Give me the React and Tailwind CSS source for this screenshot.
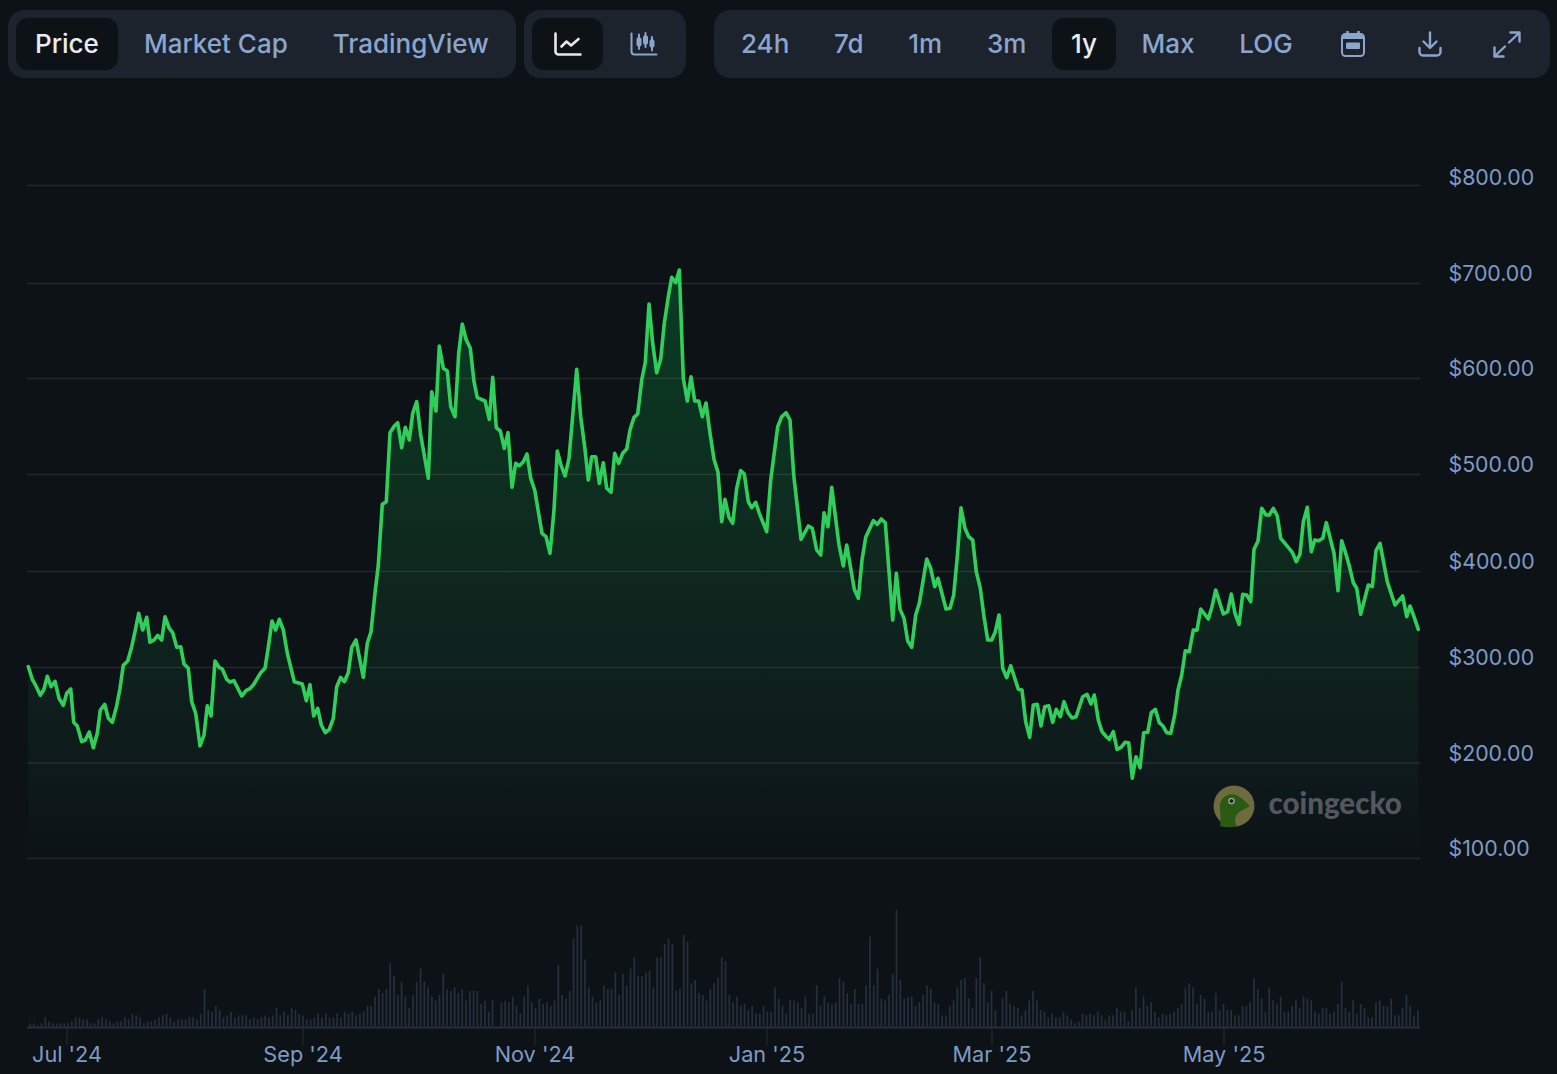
import React from "react";

const PRICE = [
  [28.3,666.7],[32.3,679.3],[36,686],[40.3,695.3],[44,689.3],[47.3,676.3],[51,686.7],[55,681.3],[59,698.3],[63.3,705.3],[66.7,693.3],[70.7,689],[73.7,722.3],[77.3,726],[81.7,741.7],[85.3,740],[89.3,732],[93.3,747.7],[97.3,733.3],[100.3,710],[104.7,704.3],[108.3,718.3],[112.3,722.3],[116.7,705.7],[120,688.3],[123.3,665.3],[127.7,661],[131.7,646.7],[135,631.7],[138.7,613.3],[142.7,630],[146.7,617.3],[150,642.3],[154,640],[157.7,635.3],[161.7,640],[165,616.7],[169.3,628.3],[172.7,632.7],[176.7,647.3],[180.7,646.7],[184,664],[188.3,668.3],[191.7,701.7],[195.7,713.3],[200,746],[204,735],[207.3,705.7],[211,716],[215,661],[219,667.3],[222.3,669],[226.7,679.3],[230,682],[234,680.7],[241.7,696],[246,690.7],[250,688.7],[254,684],[260.7,672.7],[265,668.3],[268.3,647.3],[272,621],[275.7,630],[279.3,619.3],[283.3,630],[287.3,653.3],[294.3,681.7],[302.3,684],[306.3,700.7],[310,684.7],[313.7,716],[317.7,708.3],[321.3,725],[325.3,732.7],[329.3,729.3],[333.3,718.3],[336.7,686.7],[340.7,677.3],[344.3,681.7],[348.3,672.7],[351.7,647.3],[356,640],[363.3,677.3],[367.3,643.3],[371,631.7],[375,593],
  [378.3,565],[382.3,504.3],[386.3,501.7],[390,432.7],[394.3,426],[397.7,422.7],[401.7,447.7],[405.3,427.3],[409.3,440],[412.7,413.3],[416.7,401.7],[420.7,435],[428.3,478.3],[431.7,391.7],[436,411],[439.3,346],[443.3,368.3],[447.3,371],[450.7,406.7],[455,416.7],[458.7,353.3],[462.3,324],[466,339.3],[470.3,348.3],[474,381.7],[477.3,397.7],[485,401],[489.3,419.3],[492.7,377.3],[496.3,427.7],[500.3,431],[504.3,448.3],[508,432.7],[512,487.3],[515.7,463.3],[519.3,465.7],[523.3,461.7],[527,454],[530.7,478.3],[534.7,490],[542,533.3],[546,536.7],[550,553.3],[554,510],[557.3,451],[561,465],[565,476],[569,458.3],[576.7,369.3],[580.7,416.7],[584.7,446.7],[588.3,480],[591.7,456.7],[595.7,456.7],[599.3,483.3],[603.3,462.7],[606.7,488.3],[611,492.3],[614.7,453.3],[618.7,463.3],[622.7,453.3],[626.7,449],[630,430],[634,417.3],[637.7,414],[641.7,380],[645.3,362.3],[649,304],[652.7,343.3],[656.7,372.7],[660.7,359],[664.3,323.3],[668.3,296.7],[671.7,277.3],[675.7,282.7],[679.3,270],[683.3,378.3],[687.3,401],[691,376.7],[694.7,401],[698.7,401],[702.3,416.7],
  [706,403],[710,433.3],[714,459.3],[718,472.3],[721.7,521.7],[725,499.3],[729,517.3],[732.7,523.3],[736.7,488.3],[740.7,470.7],[744.3,474],[748.3,501.7],[751.7,507.7],[755.7,502.3],[759.3,513.3],[766.7,531.7],[770.7,480],[777.7,426.7],[781.7,416.7],[786,412.7],[790,420],[793.7,475],[801,539.3],[808.3,526],[812.3,528.3],[816.7,550],[820.7,555],[824,512.7],[828,526.7],[831.7,487.3],[839,545],[843.3,566],[846.7,545],[854.3,589.3],[858.3,598.3],[862,560],[865.7,537.3],[873.3,520.7],[877.3,524.3],[881.3,519],[885.3,522.7],[892.7,620],[896.3,573.3],[900,609.3],[904,618.3],[907.7,641],[911.7,647.3],[915.7,615],[919.3,603.3],[926.7,559],[930.7,568.3],[934.7,586.7],[938,578.3],[946,609],[950,608.3],[953.7,595],[957.3,556.7],[961,507.7],[965,528.3],[968.7,536.7],[972.7,540],[976.3,571.7],[980.3,588.3],[984,616.7],[987.7,640],[991.7,640],[995.3,631.7],[999,615],[1002.7,668.3],[1006.7,677.7],[1010.7,665.7],[1018.3,689.3],[1022,690],[1025.7,721.7],[1029.7,737.3],[1033.3,705],[1037.3,704.3],
  [1041,726],[1044.7,706.7],[1048.7,705.7],[1052.7,722.3],[1056.3,709.3],[1060.3,716.7],[1064,701.7],[1068,712.7],[1072,718],[1076,716.7],[1082.7,696.7],[1087,694.3],[1091,704],[1094.3,695],[1098.3,720],[1102,731.7],[1105.7,736],[1109.3,739.3],[1113.3,731.7],[1117,749.3],[1121,747.3],[1125,742.3],[1128.7,742.7],[1132.3,778.3],[1136,756.7],[1140,767.7],[1143.7,732.7],[1147.7,732.3],[1151.3,712.7],[1155.3,709.3],[1159.3,722.7],[1163,726],[1166.7,732.7],[1170.7,733.3],[1174.7,715],[1178,690],[1181.7,675],[1185.3,650.7],[1189.3,651.7],[1193.3,630],[1197,630.3],[1200.7,609],[1208.3,619],[1212,606.7],[1215.7,590],[1223.3,614],[1227.7,611.7],[1231.3,594],[1235,613.3],[1239,624.3],[1242.7,594.3],[1246.7,595],[1250.7,601.7],[1254,549.3],[1258,541],[1261.7,508.3],[1266,515],[1269.3,515],[1273.3,508.3],[1277.3,516],[1280.7,538.3],[1288.3,547.3],[1292.3,552.3],[1296.3,561.7],[1300,554],[1303.3,521.7],[1307.3,507.3],[1311.3,551.7],[1314.7,540],[1318.7,540.7],[1322.7,538.3],[1326.3,522.7],[1334,553.3],[1338,590.7],[1341.7,540.7],[1345.7,553.3],[1349.3,566],[1353.3,582.7],[1356.7,588.3],[1360.7,614.3],[1368.3,585],[1372.3,586.7],[1376,550.7],[1380,543.3],[1387.3,581.7],[1395,605],[1402.7,596],[1406.7,616.7],[1410,606],[1414,616.7],[1418.3,629.3],
];

// bar tops, read off in 3x crop rows (baseline sits at 380)
const VOL_A = [370,370,376,370,352,364,370,370,370,370,370,364,352,352,358,358,370,370,358,352,358,364,370,364,364,352,358,341,346,352,370,364,364,358,352,346,341,352,364,358,358,358,352,352,358,341,268,330,335,318,330,352,346,335,352,346,346,346,358,352,358,352,346,352,346,324,346,335,346,324,330,341,346,358,358,352,341,352,341,352,352,341,352,335,341,335,346,341,335,318,318,290,268,279,268,190,228,285,245,290,324,285,245,205,245,262,290,302,285,222,268,273,262,279,268,302,273,273,273,312,302,335,300];
const VOL_B = [307,302,307,290,318,341,290,256,307,324,296,312,307,318,302,195,285,296,273,115,76,76,178,262,290,307,302,256,267,267,217,285,222,256,205,172,228,228,217,211,262,172,172,132,115,132,273,267,105,126,250,240,279,285,302,267,250,234,172,183,285,307,290,318,312,330,318,341,341,318,335,335,262,296,318,341,301,301,307,324,290,341,341,256,318,290,307,312,307,234,245,279,312,267,312,312,256,110,256,205,296,301,285,222,30,240,296,290,290,318,307,285,256,267,307,312,346,346,318,301,262,240,234,296,323,234,172,250,307,273,330];
const VOL_C = [295,273,312,318,324,346,330,301,273,301,330,335,352,341,352,352,335,346,358,370,364,341,346,341,346,335,346,358,346,346,324,335,335,364,330,262,324,290,318,307,335,352,341,346,341,335,324,312,262,250,262,312,285,296,335,335,279,330,312,330,330,346,346,318,318,307,234,267,296,335,262,301,312,290,335,335,318,301,324,290,296,301,335,341,324,324,341,335,312,245,324,335,301,341,312,324,352,352,307,301,318,318,296,346,346,324,285,318,346,330];

const BARS = [
  ...VOL_A.map((top, i) => [29.3 + i * 3.79, top]),
  ...VOL_B.map((top, i) => [500.5 + i * 3.8, top]),
  ...VOL_C.map((top, i) => [1001.7 + i * 3.81, top]),
];

const GRID = [185.5, 283.5, 378.5, 474.5, 571.5, 667.5, 763, 858.5];
const Y_LABELS = [
  ["$800.00", 185],
  ["$700.00", 281],
  ["$600.00", 376],
  ["$500.00", 472],
  ["$400.00", 569],
  ["$300.00", 665],
  ["$200.00", 761],
  ["$100.00", 856],
];
const X_LABELS = [
  ["Jul '24", 67],
  ["Sep '24", 303],
  ["Nov '24", 535],
  ["Jan '25", 767],
  ["Mar '25", 992],
  ["May '25", 1224],
];

const line = PRICE.map(([x, y]) => `${x},${y}`).join(" ");
const area = `28.3,859 ${line} 1418.3,859`;

function Tab({ active, children, className }) {
  return (
    <button
      className={`flex h-[52px] shrink-0 items-center justify-center rounded-xl px-[19px] text-[26px] leading-none font-medium whitespace-nowrap ${
        active ? "bg-[#0d1217] text-[#e9ecf0]" : "text-[#8ba5cd]"
      } ${className || ""}`}
    >
      {children}
    </button>
  );
}

function LineIcon() {
  return (
    <svg width="28" height="24" viewBox="0 0 28 24" fill="none" stroke="#e4e8ee" strokeWidth="2.6" strokeLinecap="round" strokeLinejoin="round">
      <path d="M1.5 1.5V19.5a3 3 0 0 0 3 3H26.5" />
      <path d="M7.5 14.5L12.5 9.5L17 13.5L24.5 7" />
    </svg>
  );
}

function CandleIcon() {
  return (
    <svg width="28" height="24" viewBox="0 0 28 24" fill="none" stroke="#8ba5cd" strokeWidth="2" strokeLinecap="round" strokeLinejoin="round">
      <path d="M1.5 1.5V19.5a3 3 0 0 0 3 3H26.5" />
      <path d="M9 2.5V17M15.5 1V15M22 5V18.5" />
      <rect x="7" y="6" width="4" height="8" rx="1" fill="#8ba5cd" strokeWidth="1" />
      <rect x="13.5" y="4" width="4" height="8" rx="1" fill="#8ba5cd" strokeWidth="1" />
      <rect x="20" y="8" width="4" height="7" rx="1" fill="#8ba5cd" strokeWidth="1" />
    </svg>
  );
}

function CalendarIcon() {
  return (
    <svg width="24" height="26" viewBox="0 0 24 26" fill="none">
      <path d="M6.5 0.5V4M17.5 0.5V4" stroke="#8ba5cd" strokeWidth="2.6" strokeLinecap="round" />
      <rect x="1" y="3" width="22" height="22" rx="3.5" stroke="#8ba5cd" strokeWidth="2" />
      <path d="M2 8V5.5a2 2 0 0 1 2-2H20a2 2 0 0 1 2 2V8z" fill="#8ba5cd" />
      <rect x="5" y="11.5" width="14" height="6.5" rx="1" fill="#8ba5cd" />
    </svg>
  );
}

function DownloadIcon() {
  return (
    <svg width="24" height="26" viewBox="0 0 24 26" fill="none" stroke="#8ba5cd" strokeWidth="2.4" strokeLinecap="round" strokeLinejoin="round">
      <path d="M12 1.5V16.5M5.5 10.5L12 17L18.5 10.5" />
      <path d="M1.5 17V21a3.5 3.5 0 0 0 3.5 3.5H19a3.5 3.5 0 0 0 3.5-3.5V17" />
    </svg>
  );
}

function ExpandIcon() {
  return (
    <svg width="28" height="27" viewBox="0 0 28 27" fill="none" stroke="#8ba5cd" strokeWidth="2.4" strokeLinecap="round" strokeLinejoin="round">
      <path d="M17.5 1.5H26.5V10.5M26 2L16 11.5" />
      <path d="M10.5 25.5H1.5V16.5M2 25L12 15.5" />
    </svg>
  );
}

function Logo() {
  return (
    <g>
      <circle cx="1234" cy="806" r="20.5" fill="#6f6b3e" />
      <path d="M1220 826C1222 815 1218 807 1221 801C1224 795 1231 793 1236 795C1241 797 1246 802 1250 806C1244 810 1238 811 1236 816C1234.5 820 1235 824 1237 826.3C1231 827.5 1225 827.5 1220 826Z" fill="#2b5a14" />
      <circle cx="1231.5" cy="801" r="3.2" fill="#a9aca2" />
      <circle cx="1231.5" cy="801" r="2" fill="#1d2320" />
    </g>
  );
}

function Chart() {
  return (
    <svg width="1557" height="986" viewBox="0 88 1557 986" className="block">
      <defs>
        <linearGradient id="priceFill" gradientUnits="userSpaceOnUse" x1="0" y1="270" x2="0" y2="859">
          <stop offset="0" stopColor="#0a3d22" />
          <stop offset="0.45" stopColor="#0e2a1f" />
          <stop offset="0.85" stopColor="#0e1a1b" />
          <stop offset="1" stopColor="#0d1217" />
        </linearGradient>
      </defs>

      <polygon points={area} fill="url(#priceFill)" />
      {GRID.map((y) => (
        <line key={y} x1="27" x2="1420" y1={y} y2={y} stroke="#ffffff" strokeOpacity="0.09" strokeWidth="1.4" />
      ))}
      <polyline points={line} fill="none" stroke="#30cf5c" strokeWidth="3.6" strokeLinejoin="round" strokeLinecap="round" />

      <Logo />
      <text x="1268.5" y="814" className="fill-[#54585e] font-[Lato,sans-serif] text-[29.5px] font-black">coingecko</text>

      {Y_LABELS.map(([label, y]) => (
        <text key={label} x="1448.5" y={y} className="fill-[#7d9bc6] text-[21.3px]">{label}</text>
      ))}

      {BARS.map(([x, top], i) => (
        <rect key={i} x={x} y={900 + top / 3} width="1.7" height={(380 - top) / 3} fill="#262f3d" />
      ))}
      <line x1="27" x2="1420" y1="1027.5" y2="1027.5" stroke="#262f3d" strokeWidth="2" />
      {X_LABELS.map(([label, x]) => (
        <g key={label}>
          <line x1={x} x2={x} y1="1028" y2="1045" stroke="#1f2631" strokeWidth="1.4" />
          <text x={x} y="1062" textAnchor="middle" className="fill-[#7d9bc6] text-[21.7px]">{label}</text>
        </g>
      ))}
    </svg>
  );
}

export default function App() {
  return (
    <div className="h-[1074px] w-[1557px] overflow-hidden bg-[#0d1217] font-[Inter,sans-serif]">
      <div className="flex pt-[10px] pr-[7px] pb-[10px] pl-2">
        <div className="flex w-[508px] shrink-0 gap-[7px] rounded-2xl bg-[#1c232d] p-2">
          <Tab active>Price</Tab>
          <Tab>Market Cap</Tab>
          <Tab>TradingView</Tab>
        </div>
        <div className="ml-2 flex gap-[6px] rounded-2xl bg-[#1c232d] p-2">
          <Tab active className="w-[71px] !px-0"><LineIcon /></Tab>
          <Tab className="w-[69px] !px-0"><CandleIcon /></Tab>
        </div>
        <div className="ml-7 flex flex-1 gap-[6.7px] rounded-2xl bg-[#1c232d] p-2">
          <Tab>24h</Tab>
          <Tab>7d</Tab>
          <Tab>1m</Tab>
          <Tab>3m</Tab>
          <Tab active>1y</Tab>
          <Tab>Max</Tab>
          <Tab>LOG</Tab>
          <Tab className="w-[70px] !px-0"><CalendarIcon /></Tab>
          <Tab className="w-[70px] !px-0"><DownloadIcon /></Tab>
          <Tab className="w-[70px] !px-0"><ExpandIcon /></Tab>
        </div>
      </div>
      <Chart />
    </div>
  );
}
